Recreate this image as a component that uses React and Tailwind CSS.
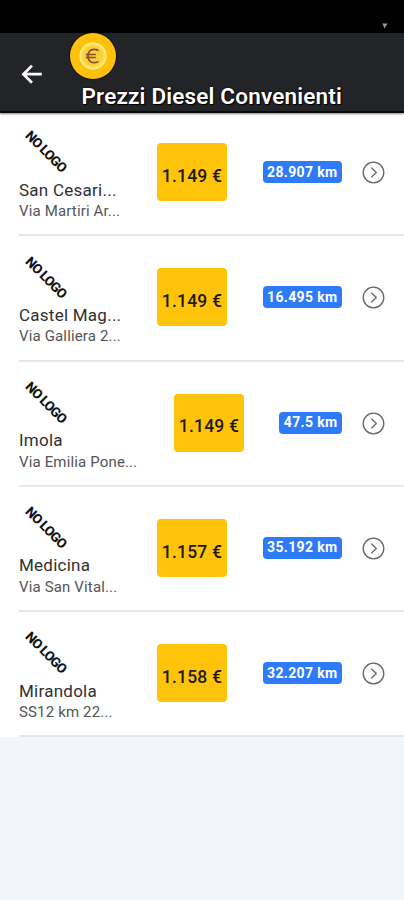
const stations = [
  { name: "San Cesari...", address: "Via Martiri Ar...", price: "1.149 €", distance: "28.907 km" },
  { name: "Castel Mag...", address: "Via Galliera 2...", price: "1.149 €", distance: "16.495 km" },
  { name: "Imola", address: "Via Emilia Pone...", price: "1.149 €", distance: "47.5 km", wide: true },
  { name: "Medicina", address: "Via San Vital...", price: "1.157 €", distance: "35.192 km" },
  { name: "Mirandola", address: "SS12 km 22...", price: "1.158 €", distance: "32.207 km" },
];

function BackArrow() {
  return (
    <svg className="mt-[31px] ml-[21px] h-[21px] w-[22px] shrink-0" viewBox="0 0 22 21" fill="none" stroke="#fff" strokeWidth="2.7">
      <path d="M20.8 10.2H3M11 1.6L2.4 10.2l8.6 8.6" />
    </svg>
  );
}

function Coin() {
  return (
    <svg className="-mt-[1px] -ml-[0.5px] h-[48px] w-[48px]" viewBox="0 0 48 48">
      <circle cx="24" cy="24" r="24" fill="#17150f" />
      <circle cx="24" cy="24" r="23" fill="#ffc10c" />
      <circle cx="24" cy="24" r="12.8" fill="#ffdc4b" stroke="#fff08c" strokeWidth="1.6" />
      <circle cx="24" cy="24" r="10" fill="#fbce3c" />
      <path d="M29.5 18.6c-5.5-3-10.5-.5-10.5 5.4s5 8.400 10.500 5.400M16.800 22.500h10M16.800 25.500h10" fill="none" stroke="#85502a" strokeWidth="1.7" />
    </svg>
  );
}

function Chevron() {
  return (
    <svg className="mt-[50px] ml-[20px] h-[23px] w-[23px] shrink-0" viewBox="0 0 23 23" fill="none" stroke="#666" strokeWidth="1.3">
      <circle cx="11.500" cy="11.500" r="10.300" />
      <path d="M9.400 6.700l4.900 4.800-4.900 4.800" />
    </svg>
  );
}

function Station({ name, address, price, distance, wide }) {
  return (
    <li className="ml-[19px] flex h-[125.25px] items-start border-b-2 border-[#e7e7e9]">
      <div className={wide ? "w-[155px] shrink-0" : "w-[138px] shrink-0"}>
        <div className="flex h-[68px] w-[53px] items-center justify-center pt-[14px]">
          <span className="rotate-[45deg] whitespace-nowrap text-[13.5px] leading-none font-extrabold tracking-[-0.75px] text-[#111]">NO LOGO</span>
        </div>
        <div className="whitespace-nowrap pt-[0.5px] text-[17px] leading-[20px] tracking-[0.25px] text-[#303030]">{name}</div>
        <div className="mt-[2.5px] whitespace-nowrap text-[15px] leading-[18px] tracking-[0.15px] text-[#555]">{address}</div>
      </div>
      <div className="mt-[32px] flex h-[58px] w-[70px] shrink-0 items-center justify-center rounded-[4px] bg-[#ffc409] pt-[8px] text-[17.5px] font-medium tracking-[0.2px] whitespace-nowrap text-[#211a08]">
        {price}
      </div>
      <div className="mt-[50px] ml-auto flex h-[22px] shrink-0 items-center rounded-[4px] bg-[#2e7bfa] px-[4.500px] text-[14px] font-bold tracking-[0.35px] whitespace-nowrap text-white">
        {distance}
      </div>
      <div className="w-[62px] shrink-0">
        <Chevron />
      </div>
    </li>
  );
}

export default function App() {
  return (
    <div className="h-[900px] w-[404px] overflow-hidden bg-[#f3f5fa] font-['Roboto',sans-serif]">
      <div className="flex h-[33px] justify-end bg-black pt-[23px] pr-[16px]">
        <svg className="h-[6px] w-[6px]" viewBox="0 0 6 6">
          <path d="M0.500 0.500h5L2.500 5.500z" fill="#999" />
        </svg>
      </div>
      <header className="relative z-10 flex h-[80px] border-b-2 border-[#08090b] bg-[#222428] shadow-[0_1px_2px_rgba(0,0,0,0.5)]">
        <BackArrow />
        <div className="ml-[26px] flex flex-col">
          <Coin />
          <h1 className="mt-[1.5px] ml-[12.500px] whitespace-nowrap text-[22.5px] leading-[28px] font-semibold tracking-[0.18px] text-white [text-shadow:0_0_2px_#000,1px_1px_1px_#000]">
            Prezzi Diesel Convenienti
          </h1>
        </div>
      </header>
      <main className="-mt-[2px] bg-white">
        <ul>
          {stations.map((station) => (
            <Station key={station.name} {...station} />
          ))}
        </ul>
      </main>
    </div>
  );
}
